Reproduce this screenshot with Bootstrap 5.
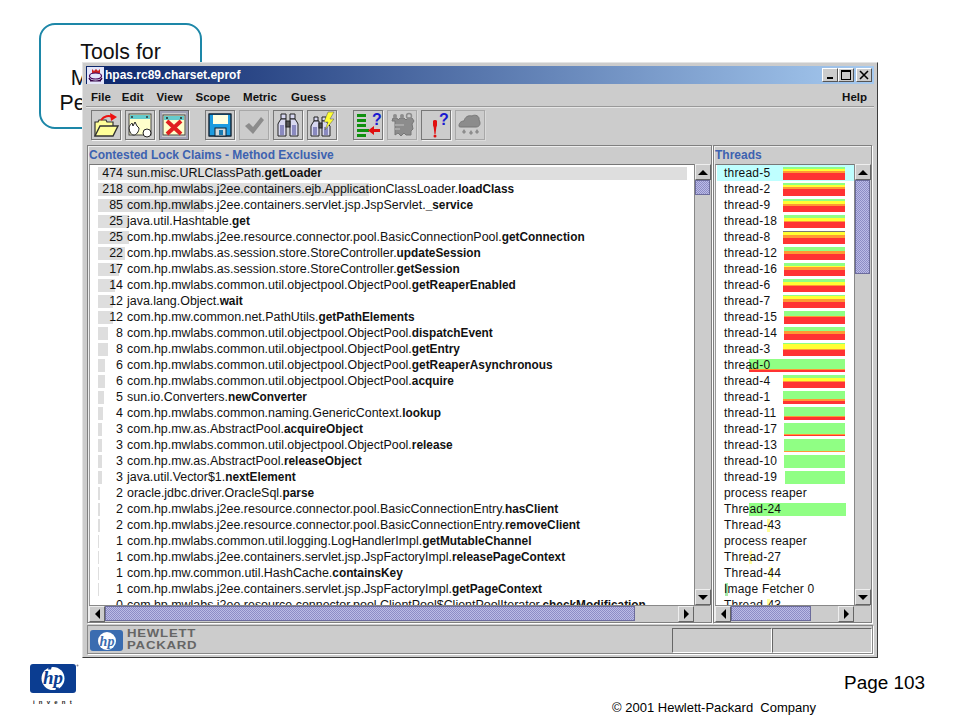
<!DOCTYPE html>
<html lang="en">
<head>
<meta charset="utf-8">
<title>Page 103</title>
<link rel="stylesheet" href="https://cdn.jsdelivr.net/npm/bootstrap@5.3.0/dist/css/bootstrap.min.css">
<style>
html,body{margin:0;background:#fff}
body{font-family:"Liberation Sans",Arial,sans-serif;color:#000}
.slide{position:relative;width:960px;height:720px;overflow:hidden}
.callout{width:163px;height:106px;margin:23px 0 0 39px;border:2px solid #1d87a8;border-radius:16px;padding-top:15px;text-align:center;font-size:21.3px;line-height:25.5px;color:#111}
.win{position:absolute;left:82px;top:62px;width:796px;height:596px;background:#ccc;border:1px solid;border-color:#e4e4e4 #3c3c3c #3c3c3c #e4e4e4;padding:3px;font-size:12.45px;line-height:16px;color:#111}
.titlebar{height:18px;background:linear-gradient(90deg,#0a246a,#a6caf0);color:#fff;font-weight:700;font-size:12px;letter-spacing:0;padding-right:2px}
.tico{width:17px;height:17px;margin:0 1px;background:#dfe3f7}
.wbtn{width:16px;height:14px;background:#ccc;border:1px solid;border-color:#fff #555 #555 #fff;padding:0;border-radius:0;line-height:0}
.wbtn.last{margin-left:2px}
.menu{height:23px;padding:4px 7px 0 5px;font-weight:700;border-bottom:1px solid #999;box-shadow:0 1px 0 #e6e6e6}
.menu .nav-link{padding:0;color:#111;font-size:11.5px}
.menu .nav-link+.nav-link{margin-left:13px}
.menu .nav-link:nth-child(2){margin-left:11px}
.menu .nav-link:nth-child(6){margin-left:14px}
.menu .nav-link.ms-auto{margin-left:auto}
.tools{height:38px;padding:3px 0 0 5px;gap:4px}
.btn.tb{width:30px;height:30px;padding:0;background:#ccc;border:1px solid #777;border-radius:0;box-shadow:1px 1px 0 #f4f4f4;line-height:0;flex:none}
.btn.tb.off{border-color:#a8a8a8;box-shadow:1px 1px 0 #dadada;opacity:1}
.btn.tb.on{border-color:#666;box-shadow:inset 0 0 0 2px #a2a2b6,1px 1px 0 #f4f4f4}
.sep{width:8px;flex:none}
.panes{height:478px;gap:1px;margin-left:1px}
.pane{border:1px solid #808080;box-shadow:inset 1px 1px 0 #eee,1px 1px 0 #fff;padding:1px;min-width:0}
.pane.pl{width:625px}
.pane.pr{width:159px}
.phead{height:17px;color:#3d62b0;font-weight:700;font-size:12px;line-height:17px;white-space:nowrap}
.listrow{height:441px}
.list{flex:1;min-width:0;background:#fff;overflow:hidden;border-top:1px solid #777;border-left:1px solid #999;white-space:nowrap}
.it{display:grid;height:16px}
.it>*{grid-area:1/1;min-width:0}
.it b{font-size:11.85px}
.list.m{padding-left:8px}
.list.t{padding-left:1px}
.lbar{height:13px;margin-top:2px;background:#dedede}
.ltxt{display:flex;line-height:16px}
.cnt{width:25px;text-align:right;margin-right:4px;flex:none}
.rtxt{padding-left:7px;line-height:16px;letter-spacing:.2px;font-size:12px}
.tbar{display:flex;flex-direction:column;height:13px;margin-top:2px}
.g{background:#90ff84}.y{background:#ffff33}.o{background:#ff9933}.r{background:#ff3333}.k{background:#777}.py{background:#ffff99}.pg{background:#a8e8a8}
.tbar i{display:block}
.sel{background:#bfffff}
.vs{width:16px;flex:none;background:#ccc;border-left:1px solid #888}
.hs{height:16px;background:#ccc;border-top:1px solid #888}
.hs .corner{width:16px;flex:none}
.arr{width:16px;height:16px;flex:none;background:#ccc;border:1px solid;border-color:#eee #666 #666 #eee;display:flex;align-items:center;justify-content:center;line-height:0}
.tri{width:0;height:0;border:solid transparent}
.up{border-width:0 5px 5px;border-bottom-color:#000}
.dn{border-width:5px 5px 0;border-top-color:#000}
.lf{border-width:5px 5px 5px 0;border-right-color:#000}
.rt{border-width:5px 0 5px 5px;border-left-color:#000}
.thumb{background:repeating-conic-gradient(#8d8dc6 0 25%,#bcbce6 0 50%) 0 0/2px 2px;border:1px solid #6c6c9c}
.sb-lv{height:15px}.sb-lh{width:530px}
.sb-rv{height:94px}.sb-rh{width:80px}
.status{height:29px;margin-top:2px;border:1px solid #888;box-shadow:1px 1px 0 #fff;margin-left:1px;width:786px;padding:2px 0 0 0}
.hplogo{width:33px;height:21px;margin:2px 4px 0 2px;flex:none;background:#3a6cb0;border-radius:3px}
.hpname{font-weight:700;font-size:10.4px;line-height:12px;letter-spacing:.6px;color:#666;transform:scaleX(1.27);transform-origin:0 0;white-space:nowrap}
.cell{width:100px;height:25px;border:1px solid;border-color:#666 #fff #fff #666}
.foot{position:absolute;inset:auto 0 0 0;height:62px;padding:6px 35px 0 30px}
.inv{width:48px;font-size:6px;font-weight:700;letter-spacing:4.2px;line-height:8px;white-space:nowrap;color:#222;margin-top:4px;padding-left:3px}
.pg-no{font-size:18.9px;line-height:22px;margin-top:8px}
.copy{font-size:13px;line-height:16px;margin-top:6px;white-space:pre;padding-right:109px}
</style>
</head>
<body>
<div class="slide">
  <div class="callout">Tools for<br>M<span class="invisible">easuring</span><br>Pe<span class="invisible">rformance</span></div>

  <div class="win d-flex flex-column">
    <div class="titlebar d-flex align-items-center">
      <svg class="tico" viewBox="0 0 17 17"><rect width="17" height="17" fill="#e4e6fa"/><path d="M5 2l2 2 2-2 2 2 2-2v4H5z" fill="#c22"/><ellipse cx="8.5" cy="9" rx="6" ry="3" fill="none" stroke="#405" stroke-width="1.2"/><path d="M2 11c1 4 12 4 13 0M3 14h11" fill="none" stroke="#304" stroke-width="1.2"/></svg>
      <span>hpas.rc89.charset.eprof</span>
      <div class="ms-auto d-flex">
        <button class="btn wbtn" aria-label="Minimize"><svg width="14" height="12"><rect x="4" y="8" width="6" height="2" fill="#000"/></svg></button>
        <button class="btn wbtn" aria-label="Maximize"><svg width="14" height="12"><rect x="2.5" y="1.5" width="9" height="9" fill="none" stroke="#000"/><rect x="2" y="1" width="10" height="2" fill="#000"/></svg></button>
        <button class="btn wbtn last" aria-label="Close"><svg width="14" height="12"><path d="M3 2l8 8M11 2l-8 8" stroke="#000" stroke-width="1.6"/></svg></button>
      </div>
    </div>

    <nav class="nav menu align-items-center">
      <a class="nav-link">File</a><a class="nav-link">Edit</a><a class="nav-link">View</a><a class="nav-link">Scope</a><a class="nav-link">Metric</a><a class="nav-link">Guess</a><a class="nav-link ms-auto">Help</a>
    </nav>

    <div class="tools d-flex">
      <button class="btn tb" aria-label="Open"><svg width="28" height="28" viewBox="0 0 28 28"><path d="M3 25V11h3l1-2h7l1 2h6v4" fill="#ffff99" stroke="#333" stroke-width="1.2"/><path d="M3 25l5-10h18l-5 10z" fill="#ffff99" stroke="#333" stroke-width="1.4"/><path d="M9 9c3-4 8-5 11-3" fill="none" stroke="#e11" stroke-width="2"/><path d="M18 2l7 4-6 4z" fill="#e11"/></svg></button>
      <button class="btn tb" aria-label="Attach"><svg width="28" height="28" viewBox="0 0 28 28"><rect x="3" y="3" width="22" height="21" fill="#ffffcc" stroke="#444"/><rect x="4" y="4" width="20" height="4" fill="#66cccc"/><circle cx="6" cy="6" r="1" fill="#333"/><circle cx="21" cy="6" r="1" fill="#333"/><path d="M4 21c-2-5 0-7 2-9l1 3 2-4 2 4 2 2c0 4-3 7-5 7s-3-1-4-3z" fill="#fff" stroke="#222"/><ellipse cx="21" cy="22" rx="4" ry="4" fill="#fff" stroke="#222"/></svg></button>
      <button class="btn tb on" aria-label="Detach"><svg width="28" height="28" viewBox="0 0 28 28"><rect x="3" y="4" width="22" height="20" fill="#ffffcc" stroke="#444"/><rect x="4" y="5" width="20" height="4" fill="#66cccc"/><circle cx="7" cy="7" r="1" fill="#222"/><circle cx="21" cy="7" r="1" fill="#222"/><path d="M7 10l14 13M21 10L7 23" stroke="#e02020" stroke-width="4"/></svg></button>
      <div class="sep"></div>
      <button class="btn tb" aria-label="Save"><svg width="28" height="28" viewBox="0 0 28 28"><path d="M3 3h22v22H3z" fill="#1c9be0" stroke="#123" stroke-width="1.4" stroke-linejoin="round"/><rect x="7" y="4" width="15" height="9" fill="#ffffe0"/><rect x="9" y="17" width="11" height="8" fill="#cfd8dc" stroke="#123"/><rect x="13" y="19" width="4" height="5" fill="#1c7ab0"/></svg></button>
      <button class="btn tb off" aria-label="Check" disabled><svg width="28" height="28" viewBox="0 0 28 28"><path d="M5 15l4-3 4 4 8-10 3 3-11 14z" fill="#8c8c8c"/></svg></button>
      <button class="btn tb" aria-label="Find"><svg width="28" height="28" viewBox="0 0 28 28"><g stroke="#222" fill="#d8d8f0"><path d="M7 3h5v5H7zM16 3h5v5h-5z"/><path d="M5 11l2-3h5v17H4V13zM23 11l-2-3h-5v17h8V13z"/><rect x="12" y="10" width="4" height="6" fill="#555"/></g><rect x="6" y="14" width="4" height="10" fill="#8a8ac0"/><rect x="18" y="14" width="4" height="10" fill="#8a8ac0"/></svg></button>
      <button class="btn tb" aria-label="Find next"><svg width="28" height="28" viewBox="0 0 28 28"><g stroke="#222" fill="#d8d8f0"><path d="M6 6h4v4H6zM14 6h4v4h-4z"/><path d="M4 13l2-3h5v15H3V15zM20 13l-2-3h-4v15h8V15z"/><rect x="11" y="12" width="3" height="5" fill="#555"/></g><rect x="5" y="16" width="4" height="8" fill="#8a8ac0"/><rect x="16" y="16" width="4" height="8" fill="#8a8ac0"/><path d="M20 1h6l-4 7h4l-9 11 3-8h-4z" fill="#ffff33" stroke="#555" stroke-width=".5"/></svg></button>
      <div class="sep"></div>
      <button class="btn tb" aria-label="Guess callers"><svg width="28" height="28" viewBox="0 0 28 28"><g fill="#109010"><rect x="3" y="3" width="9" height="3"/><rect x="3" y="8" width="9" height="3"/><rect x="3" y="13" width="9" height="3"/><rect x="3" y="18" width="12" height="3"/><rect x="3" y="23" width="9" height="3"/></g><path d="M26 18h-6v-3l-6 4.500 6 4.500v-3h6z" fill="#e01010"/><text x="18" y="14" font-family="Liberation Sans" font-weight="700" font-size="16" fill="#1a1ad0">?</text></svg></button>
      <button class="btn tb off" aria-label="Threads" disabled><svg width="28" height="28" viewBox="0 0 28 28"><path d="M4 10l1-3h4l1 2 2-2h4l2 2 2-2h4l2 3-2 3 1 5-2 2v4h-5l-2-2-3 3-3-3-3 2V10z" fill="#8c8c8c" stroke="#777"/><path d="M7 14h9M7 18h5" stroke="#b0b0b0" stroke-width="1.500"/><circle cx="7" cy="5" r="2" fill="#8c8c8c"/><circle cx="14" cy="5" r="2" fill="#8c8c8c"/><circle cx="21" cy="5" r="2.500" fill="none" stroke="#8c8c8c" stroke-width="1.500"/></svg></button>
      <button class="btn tb" aria-label="Guess errors"><svg width="28" height="28" viewBox="0 0 28 28"><path d="M11 10c1-1 3-1 4 0l-.5 5-1 8h-1l-1-8z" fill="#e01010"/><rect x="11" y="9" width="4" height="7" rx="2" fill="#e01010"/><circle cx="13" cy="25" r="1.500" fill="#e01010"/><text x="17" y="14" font-family="Liberation Sans" font-weight="700" font-size="16" fill="#1a1ad0">?</text></svg></button>
      <button class="btn tb off" aria-label="Rain" disabled><svg width="28" height="28" viewBox="0 0 28 28"><path d="M3 15c0-4 3-5 5-5 1-4 4-6 8-5 3-2 8 0 7 4 2 3 1 7-3 7H5c-1 0-2 0-2-1z" fill="#8c8c8c" stroke="#777"/><path d="M8 18l-2 3 2 2 2-2zM15 19l-2 3 2 2 2-2zM21 18l-2 3 2 2 2-2z" fill="#8c8c8c"/></svg></button>
    </div>

    <div class="panes d-flex">
      <section class="pane pl d-flex flex-column">
        <div class="phead">Contested Lock Claims - Method Exclusive</div>
        <div class="listrow d-flex">
          <div class="list m">
            <div class="it"><div class="lbar" style="width:589px"></div><div class="ltxt"><span class="cnt">474</span><span>sun.misc.URLClassPath.<b>getLoader</b></span></div></div>
            <div class="it"><div class="lbar" style="width:271px"></div><div class="ltxt"><span class="cnt">218</span><span>com.hp.mwlabs.j2ee.containers.ejb.ApplicationClassLoader.<b>loadClass</b></span></div></div>
            <div class="it"><div class="lbar" style="width:106px"></div><div class="ltxt"><span class="cnt">85</span><span>com.hp.mwlabs.j2ee.containers.servlet.jsp.JspServlet.<b>_service</b></span></div></div>
            <div class="it"><div class="lbar" style="width:31px"></div><div class="ltxt"><span class="cnt">25</span><span>java.util.Hashtable.<b>get</b></span></div></div>
            <div class="it"><div class="lbar" style="width:31px"></div><div class="ltxt"><span class="cnt">25</span><span>com.hp.mwlabs.j2ee.resource.connector.pool.BasicConnectionPool.<b>getConnection</b></span></div></div>
            <div class="it"><div class="lbar" style="width:27px"></div><div class="ltxt"><span class="cnt">22</span><span>com.hp.mwlabs.as.session.store.StoreController.<b>updateSession</b></span></div></div>
            <div class="it"><div class="lbar" style="width:21px"></div><div class="ltxt"><span class="cnt">17</span><span>com.hp.mwlabs.as.session.store.StoreController.<b>getSession</b></span></div></div>
            <div class="it"><div class="lbar" style="width:17px"></div><div class="ltxt"><span class="cnt">14</span><span>com.hp.mwlabs.common.util.objectpool.ObjectPool.<b>getReaperEnabled</b></span></div></div>
            <div class="it"><div class="lbar" style="width:15px"></div><div class="ltxt"><span class="cnt">12</span><span>java.lang.Object.<b>wait</b></span></div></div>
            <div class="it"><div class="lbar" style="width:15px"></div><div class="ltxt"><span class="cnt">12</span><span>com.hp.mw.common.net.PathUtils.<b>getPathElements</b></span></div></div>
            <div class="it"><div class="lbar" style="width:10px"></div><div class="ltxt"><span class="cnt">8</span><span>com.hp.mwlabs.common.util.objectpool.ObjectPool.<b>dispatchEvent</b></span></div></div>
            <div class="it"><div class="lbar" style="width:10px"></div><div class="ltxt"><span class="cnt">8</span><span>com.hp.mwlabs.common.util.objectpool.ObjectPool.<b>getEntry</b></span></div></div>
            <div class="it"><div class="lbar" style="width:7px"></div><div class="ltxt"><span class="cnt">6</span><span>com.hp.mwlabs.common.util.objectpool.ObjectPool.<b>getReaperAsynchronous</b></span></div></div>
            <div class="it"><div class="lbar" style="width:7px"></div><div class="ltxt"><span class="cnt">6</span><span>com.hp.mwlabs.common.util.objectpool.ObjectPool.<b>acquire</b></span></div></div>
            <div class="it"><div class="lbar" style="width:6px"></div><div class="ltxt"><span class="cnt">5</span><span>sun.io.Converters.<b>newConverter</b></span></div></div>
            <div class="it"><div class="lbar" style="width:5px"></div><div class="ltxt"><span class="cnt">4</span><span>com.hp.mwlabs.common.naming.GenericContext.<b>lookup</b></span></div></div>
            <div class="it"><div class="lbar" style="width:4px"></div><div class="ltxt"><span class="cnt">3</span><span>com.hp.mw.as.AbstractPool.<b>acquireObject</b></span></div></div>
            <div class="it"><div class="lbar" style="width:4px"></div><div class="ltxt"><span class="cnt">3</span><span>com.hp.mwlabs.common.util.objectpool.ObjectPool.<b>release</b></span></div></div>
            <div class="it"><div class="lbar" style="width:4px"></div><div class="ltxt"><span class="cnt">3</span><span>com.hp.mw.as.AbstractPool.<b>releaseObject</b></span></div></div>
            <div class="it"><div class="lbar" style="width:4px"></div><div class="ltxt"><span class="cnt">3</span><span>java.util.Vector$1.<b>nextElement</b></span></div></div>
            <div class="it"><div class="lbar" style="width:2px"></div><div class="ltxt"><span class="cnt">2</span><span>oracle.jdbc.driver.OracleSql.<b>parse</b></span></div></div>
            <div class="it"><div class="lbar" style="width:2px"></div><div class="ltxt"><span class="cnt">2</span><span>com.hp.mwlabs.j2ee.resource.connector.pool.BasicConnectionEntry.<b>hasClient</b></span></div></div>
            <div class="it"><div class="lbar" style="width:2px"></div><div class="ltxt"><span class="cnt">2</span><span>com.hp.mwlabs.j2ee.resource.connector.pool.BasicConnectionEntry.<b>removeClient</b></span></div></div>
            <div class="it"><div class="lbar" style="width:1px"></div><div class="ltxt"><span class="cnt">1</span><span>com.hp.mwlabs.common.util.logging.LogHandlerImpl.<b>getMutableChannel</b></span></div></div>
            <div class="it"><div class="lbar" style="width:1px"></div><div class="ltxt"><span class="cnt">1</span><span>com.hp.mwlabs.j2ee.containers.servlet.jsp.JspFactoryImpl.<b>releasePageContext</b></span></div></div>
            <div class="it"><div class="lbar" style="width:1px"></div><div class="ltxt"><span class="cnt">1</span><span>com.hp.mw.common.util.HashCache.<b>containsKey</b></span></div></div>
            <div class="it"><div class="lbar" style="width:1px"></div><div class="ltxt"><span class="cnt">1</span><span>com.hp.mwlabs.j2ee.containers.servlet.jsp.JspFactoryImpl.<b>getPageContext</b></span></div></div>
            <div class="it"><div class="ltxt"><span class="cnt">0</span><span>com.hp.mwlabs.j2ee.resource.connector.pool.ClientPool$ClientPoolIterator.<b>checkModification</b></span></div></div>
          </div>
          <div class="vs d-flex flex-column">
            <div class="arr"><span class="tri up"></span></div>
            <div class="thumb sb-lv"></div>
            <div class="flex-grow-1"></div>
            <div class="arr"><span class="tri dn"></span></div>
          </div>
        </div>
        <div class="hs d-flex">
          <div class="arr"><span class="tri lf"></span></div>
          <div class="thumb sb-lh"></div>
          <div class="flex-grow-1"></div>
          <div class="arr"><span class="tri rt"></span></div>
          <div class="corner"></div>
        </div>
      </section>

      <section class="pane pr d-flex flex-column">
        <div class="phead">Threads</div>
        <div class="listrow d-flex">
          <div class="list t">
            <div class="it sel"><div class="tbar" style="margin-left:66px;width:62px"><i class="g" style="height:2px"></i><i class="y" style="height:2px"></i><i class="o" style="height:2px"></i><i class="r" style="height:7px"></i></div><div class="rtxt">thread-5</div></div>
            <div class="it"><div class="tbar" style="margin-left:66px;width:62px"><i class="g" style="height:2px"></i><i class="y" style="height:2px"></i><i class="o" style="height:2px"></i><i class="r" style="height:7px"></i></div><div class="rtxt">thread-2</div></div>
            <div class="it"><div class="tbar" style="margin-left:66px;width:62px"><i class="g" style="height:2px"></i><i class="y" style="height:3px"></i><i class="o" style="height:2px"></i><i class="r" style="height:6px"></i></div><div class="rtxt">thread-9</div></div>
            <div class="it"><div class="tbar" style="margin-left:67px;width:61px"><i class="g" style="height:3px"></i><i class="y" style="height:3px"></i><i class="o" style="height:1px"></i><i class="r" style="height:6px"></i></div><div class="rtxt">thread-18</div></div>
            <div class="it"><div class="tbar" style="margin-left:66px;width:62px"><i class="k" style="height:1px"></i><i class="y" style="height:3px"></i><i class="o" style="height:3px"></i><i class="r" style="height:6px"></i></div><div class="rtxt">thread-8</div></div>
            <div class="it"><div class="tbar" style="margin-left:67px;width:61px"><i class="g" style="height:4px"></i><i class="o" style="height:3px"></i><i class="r" style="height:6px"></i></div><div class="rtxt">thread-12</div></div>
            <div class="it"><div class="tbar" style="margin-left:67px;width:61px"><i class="g" style="height:3px"></i><i class="y" style="height:1px"></i><i class="o" style="height:3px"></i><i class="r" style="height:6px"></i></div><div class="rtxt">thread-16</div></div>
            <div class="it"><div class="tbar" style="margin-left:66px;width:62px"><i class="g" style="height:3px"></i><i class="y" style="height:3px"></i><i class="o" style="height:1px"></i><i class="r" style="height:6px"></i></div><div class="rtxt">thread-6</div></div>
            <div class="it"><div class="tbar" style="margin-left:66px;width:62px"><i class="g" style="height:1px"></i><i class="y" style="height:3px"></i><i class="o" style="height:3px"></i><i class="r" style="height:6px"></i></div><div class="rtxt">thread-7</div></div>
            <div class="it"><div class="tbar" style="margin-left:67px;width:61px"><i class="g" style="height:5px"></i><i class="o" style="height:1px"></i><i class="r" style="height:7px"></i></div><div class="rtxt">thread-15</div></div>
            <div class="it"><div class="tbar" style="margin-left:67px;width:61px"><i class="g" style="height:4px"></i><i class="o" style="height:3px"></i><i class="r" style="height:6px"></i></div><div class="rtxt">thread-14</div></div>
            <div class="it"><div class="tbar" style="margin-left:66px;width:62px"><i class="g" style="height:1px"></i><i class="y" style="height:5px"></i><i class="o" style="height:1px"></i><i class="r" style="height:6px"></i></div><div class="rtxt">thread-3</div></div>
            <div class="it"><div class="tbar" style="margin-left:32px;width:96px"><i class="g" style="height:10px"></i><i class="o" style="height:1px"></i><i class="r" style="height:2px"></i></div><div class="rtxt">thread-0</div></div>
            <div class="it"><div class="tbar" style="margin-left:66px;width:62px"><i class="g" style="height:3px"></i><i class="y" style="height:3px"></i><i class="o" style="height:1px"></i><i class="r" style="height:6px"></i></div><div class="rtxt">thread-4</div></div>
            <div class="it"><div class="tbar" style="margin-left:66px;width:62px"><i class="g" style="height:8px"></i><i class="o" style="height:2px"></i><i class="r" style="height:3px"></i></div><div class="rtxt">thread-1</div></div>
            <div class="it"><div class="tbar" style="margin-left:67px;width:61px"><i class="g" style="height:9px"></i><i class="o" style="height:1px"></i><i class="r" style="height:3px"></i></div><div class="rtxt">thread-11</div></div>
            <div class="it"><div class="tbar" style="margin-left:67px;width:61px"><i class="g" style="height:11px"></i><i class="o" style="height:1px"></i><i class="r" style="height:1px"></i></div><div class="rtxt">thread-17</div></div>
            <div class="it"><div class="tbar" style="margin-left:67px;width:61px"><i class="g" style="height:12px"></i><i class="o" style="height:1px"></i></div><div class="rtxt">thread-13</div></div>
            <div class="it"><div class="tbar" style="margin-left:67px;width:61px"><i class="g" style="height:13px"></i></div><div class="rtxt">thread-10</div></div>
            <div class="it"><div class="tbar" style="margin-left:68px;width:60px"><i class="g" style="height:13px"></i></div><div class="rtxt">thread-19</div></div>
            <div class="it"><div class="rtxt">process reaper</div></div>
            <div class="it"><div class="tbar" style="margin-left:32px;width:97px"><i class="g" style="height:13px"></i></div><div class="rtxt">Thread-24</div></div>
            <div class="it"><div class="tbar" style="margin-left:50px;width:3px"><i class="py" style="height:13px"></i></div><div class="rtxt">Thread-43</div></div>
            <div class="it"><div class="rtxt">process reaper</div></div>
            <div class="it"><div class="tbar" style="margin-left:32px;width:3px"><i class="py" style="height:13px"></i></div><div class="rtxt">Thread-27</div></div>
            <div class="it"><div class="tbar" style="margin-left:52px;width:3px"><i class="py" style="height:13px"></i></div><div class="rtxt">Thread-44</div></div>
            <div class="it"><div class="tbar" style="margin-left:8px;width:3px"><i class="pg" style="height:13px"></i></div><div class="rtxt">Image Fetcher 0</div></div>
            <div class="it"><div class="tbar" style="margin-left:50px;width:3px"><i class="py" style="height:13px"></i></div><div class="rtxt">Thread-43</div></div>
          </div>
          <div class="vs d-flex flex-column">
            <div class="arr"><span class="tri up"></span></div>
            <div class="thumb sb-rv"></div>
            <div class="flex-grow-1"></div>
            <div class="arr"><span class="tri dn"></span></div>
          </div>
        </div>
        <div class="hs d-flex">
          <div class="arr"><span class="tri lf"></span></div>
          <div class="thumb sb-rh"></div>
          <div class="flex-grow-1"></div>
          <div class="arr"><span class="tri rt"></span></div>
          <div class="corner"></div>
        </div>
      </section>
    </div>

    <div class="status d-flex">
      <div class="hplogo d-flex align-items-center justify-content-center">
        <svg width="20" height="20" viewBox="0 0 20 20"><circle cx="10" cy="10" r="9" fill="#fff"/><text x="10" y="14.500" text-anchor="middle" font-family="Liberation Serif" font-style="italic" font-weight="700" font-size="14" fill="#3a6cb0">hp</text></svg>
      </div>
      <div class="hpname">HEWLETT<br>PACKARD</div>
      <div class="cell ms-auto"></div>
      <div class="cell"></div>
    </div>
  </div>

  <footer class="foot d-flex">
    <div class="hpmark">
      <svg class="d-block" width="49" height="30" viewBox="0 0 49 30"><rect width="46" height="29" rx="3" fill="#0b3d91"/><circle cx="23" cy="14.500" r="11.500" fill="#fff"/><path d="M19 1.500l-1 4h3l1-4zM26 23.500l-1 5h3l1-5z" fill="#0b3d91"/><text x="23" y="20" text-anchor="middle" font-family="Liberation Serif" font-style="italic" font-weight="700" font-size="19" fill="#0b3d91">hp</text><circle cx="47.500" cy="1.500" r="1" fill="#889"/></svg>
      <div class="inv">invent</div>
    </div>
    <div class="ms-auto d-flex flex-column align-items-end">
      <div class="pg-no">Page 103</div>
      <div class="copy">© 2001 Hewlett-Packard  Company</div>
    </div>
  </footer>
</div>
<script src="https://cdn.jsdelivr.net/npm/bootstrap@5.3.0/dist/js/bootstrap.bundle.min.js"></script>
</body>
</html>
